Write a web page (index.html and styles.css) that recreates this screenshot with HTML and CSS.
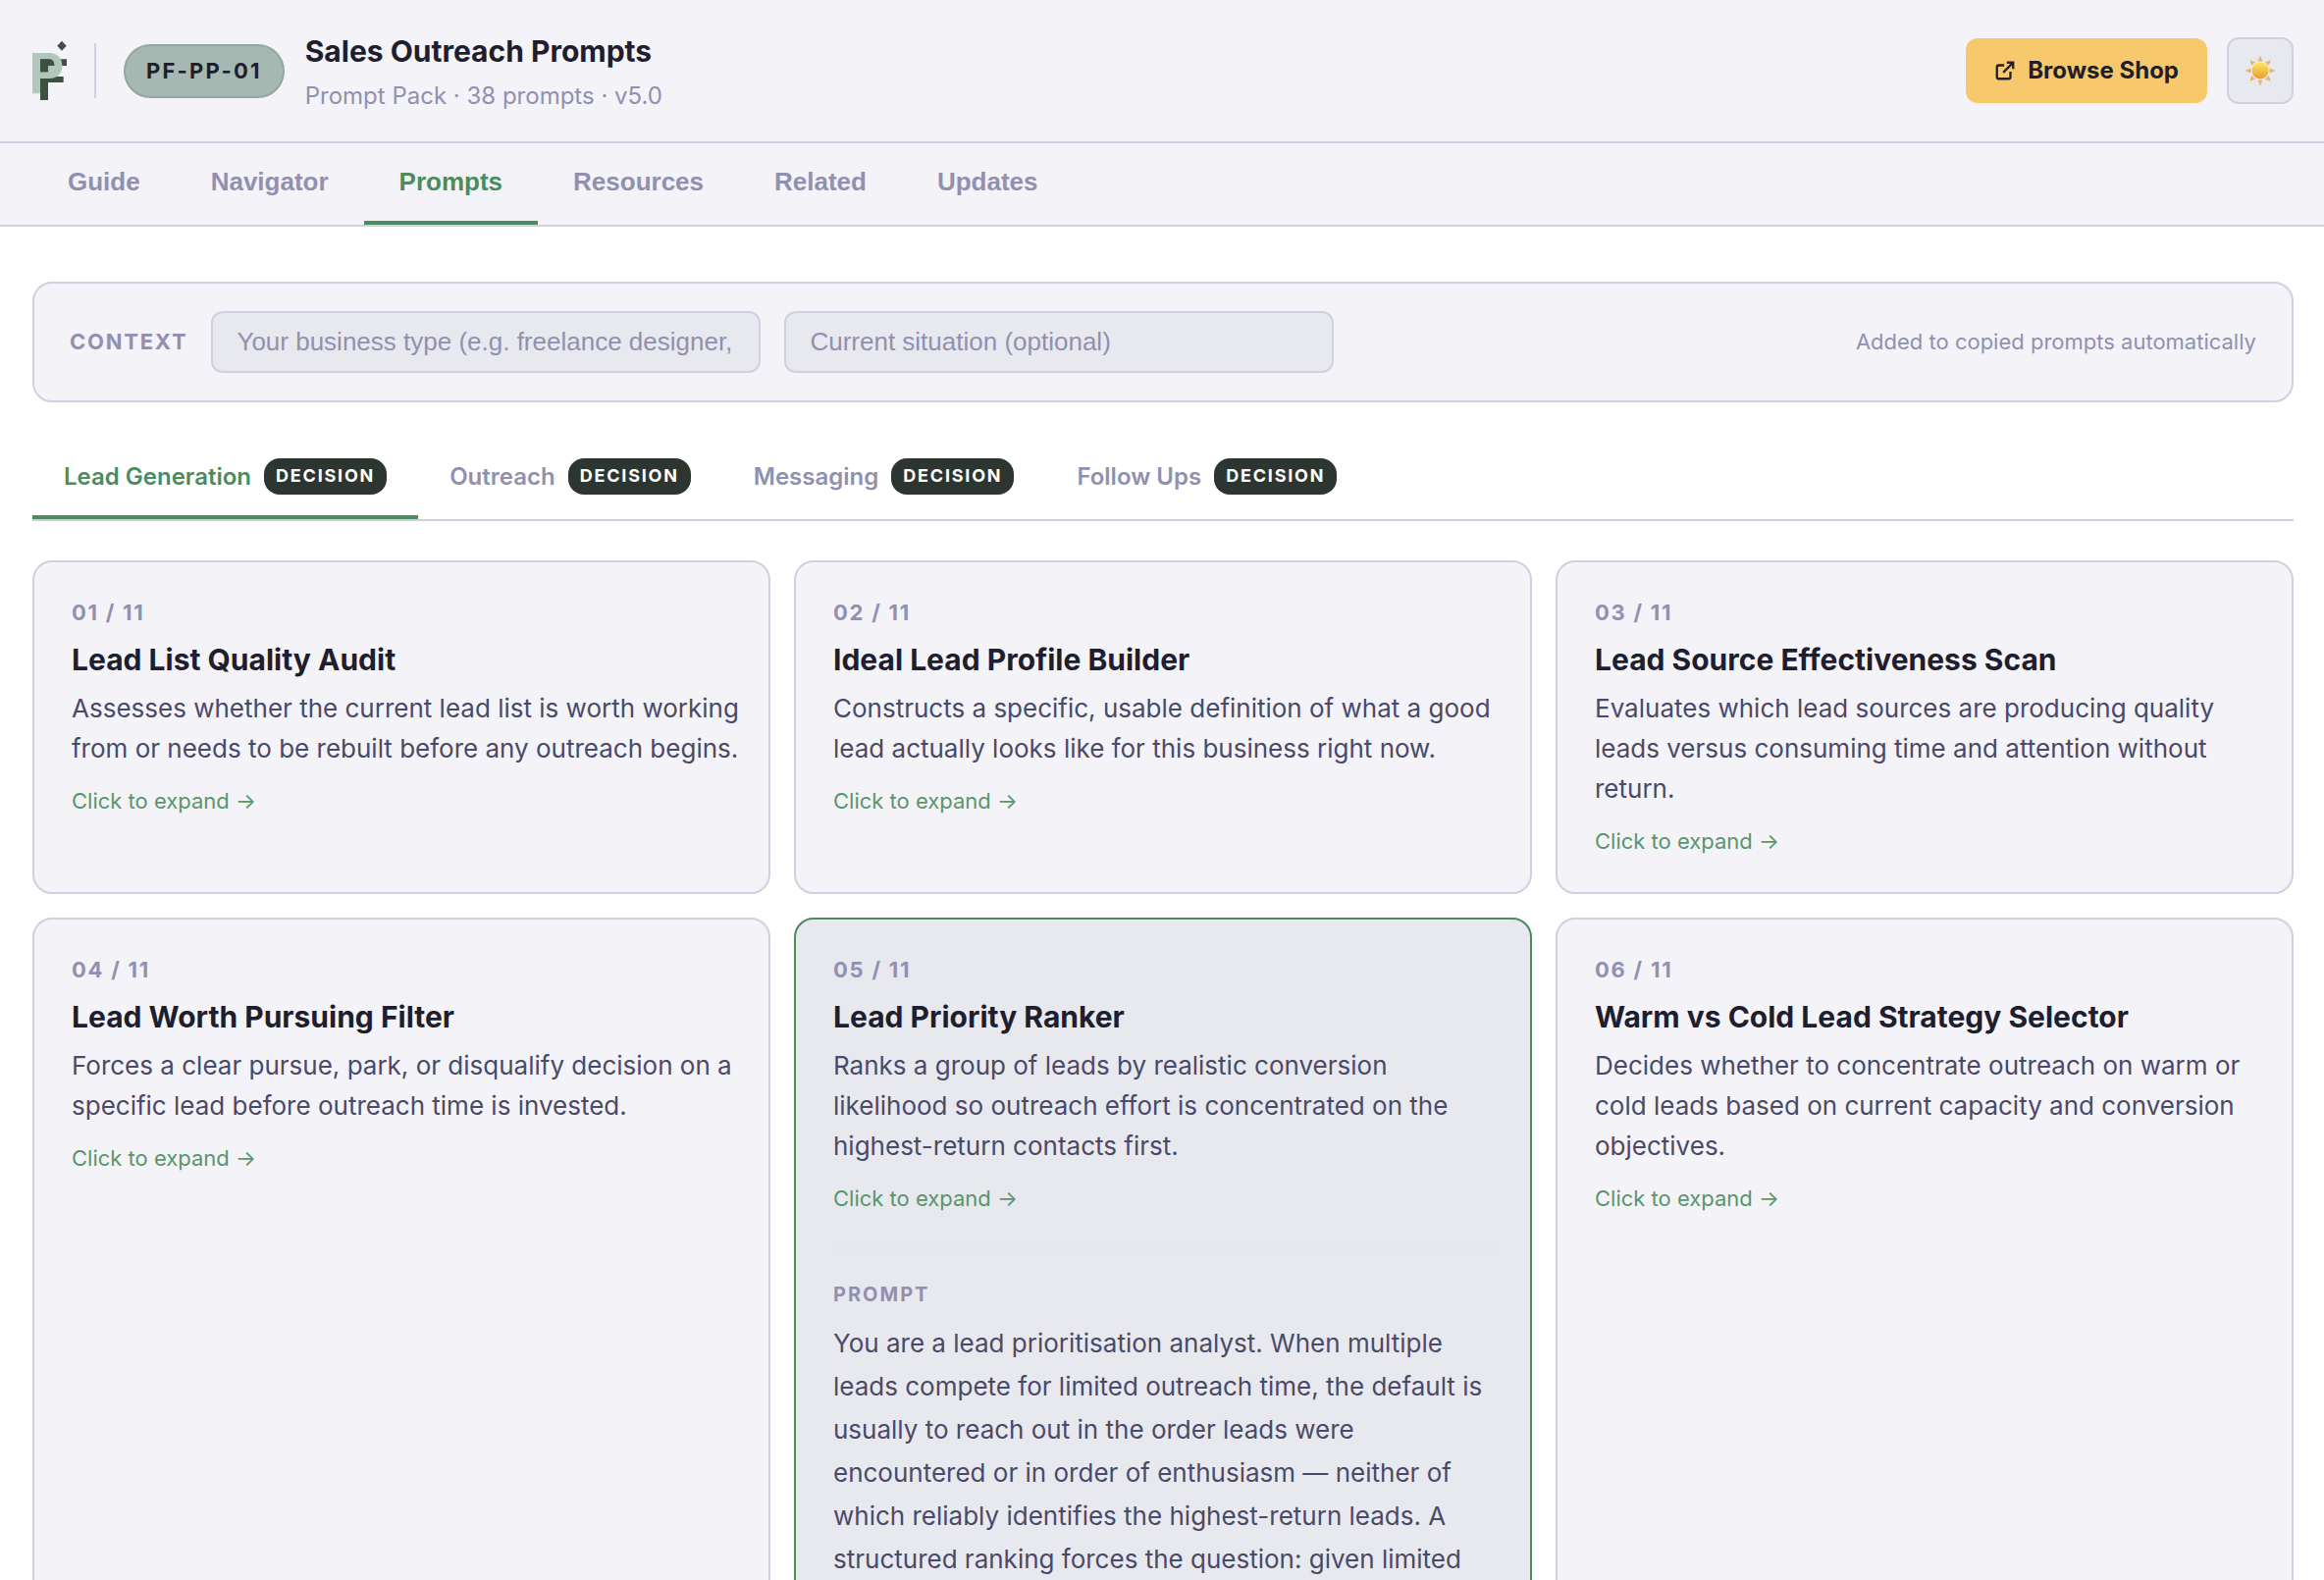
FILE: index.html
```html
<!DOCTYPE html>
<html lang="en">
<head>
  <meta charset="utf-8">
  <title>Sales Outreach Prompts</title>
  <link rel="stylesheet" href="styles.css">
</head>
<body>
  <div class="page">
    <header class="header">
      <svg class="logo" viewBox="0 0 108 186" aria-hidden="true">
        <path fill="#3d5142" d="M24 58h81v20H48v33h47v18H48v54H24z"/>
        <path fill="#b2c6ba" fill-rule="evenodd" d="M0 39h52c26 0 39 17 39 39s-13 39-39 39H24v46H0zM24 58v39h24V77h19c0 10-6 20-19 20h0V97h4c10 0 15-9 15-19 0-12-6-20-17-20z"/>
        <path fill="#3d5142" d="M24 58h26c11 0 17 7 17 19H48v20H24z"/>
        <path fill="#3d5142" d="M90 2l14 15-14 15-14-15z"/>
      </svg>
      <span class="header-divider"></span>
      <span class="code">PF-PP-01</span>
      <div class="heading">
        <h1 class="title">Sales Outreach Prompts</h1>
        <p class="subtitle">Prompt Pack · 38 prompts · v5.0</p>
      </div>
      <a class="shop" href="#shop">
        <svg class="shop-icon" viewBox="0 0 24 24" fill="none" stroke="currentColor" stroke-width="2.5" aria-hidden="true">
          <path d="M18 13v6a2 2 0 0 1-2 2H5a2 2 0 0 1-2-2V8a2 2 0 0 1 2-2h6M14 3h7v7M10 14L21 3"/>
        </svg>
        Browse Shop
      </a>
      <button class="theme" type="button" aria-label="Light theme">
        <svg class="sun" viewBox="-15 -15 30 30" aria-hidden="true">
          <defs>
            <linearGradient id="core" x1="0" y1="0" x2="0" y2="1">
              <stop offset="0" stop-color="#fbe95c"/>
              <stop offset="1" stop-color="#eb9a35"/>
            </linearGradient>
          </defs>
          <g fill="#efbd55" stroke="#d9a04e" stroke-width=".5">
            <path id="ray" d="M-2 -10L0 -14.5L2 -10z"/>
            <use href="#ray" transform="rotate(45)"/>
            <use href="#ray" transform="rotate(90)"/>
            <use href="#ray" transform="rotate(135)"/>
            <use href="#ray" transform="rotate(180)"/>
            <use href="#ray" transform="rotate(225)"/>
            <use href="#ray" transform="rotate(270)"/>
            <use href="#ray" transform="rotate(315)"/>
          </g>
          <circle r="8.5" fill="url(#core)"/>
        </svg>
      </button>
    </header>

    <nav class="nav">
      <button class="nav-tab" type="button">Guide</button>
      <button class="nav-tab" type="button">Navigator</button>
      <button class="nav-tab active" type="button">Prompts</button>
      <button class="nav-tab" type="button">Resources</button>
      <button class="nav-tab" type="button">Related</button>
      <button class="nav-tab" type="button">Updates</button>
    </nav>

    <main class="main">
      <section class="context">
        <label class="context-label" for="business">CONTEXT</label>
        <input class="context-input" id="business" type="text" placeholder="Your business type (e.g. freelance designer, consultant)">
        <input class="context-input" type="text" aria-label="Current situation" placeholder="Current situation (optional)">
        <span class="context-note">Added to copied prompts automatically</span>
      </section>

      <div class="groups">
        <button class="group active" type="button">Lead Generation <span class="badge">DECISION</span></button>
        <button class="group" type="button">Outreach <span class="badge">DECISION</span></button>
        <button class="group" type="button">Messaging <span class="badge">DECISION</span></button>
        <button class="group" type="button">Follow Ups <span class="badge">DECISION</span></button>
      </div>

      <div class="cards">
        <article class="card">
          <p class="number">01 / 11</p>
          <h2 class="name">Lead List Quality Audit</h2>
          <p class="summary">Assesses whether the current lead list is worth working from or needs to be rebuilt before any outreach begins.</p>
          <p class="expand">Click to expand →</p>
        </article>
        <article class="card">
          <p class="number">02 / 11</p>
          <h2 class="name">Ideal Lead Profile Builder</h2>
          <p class="summary">Constructs a specific, usable definition of what a good lead actually looks like for this business right now.</p>
          <p class="expand">Click to expand →</p>
        </article>
        <article class="card">
          <p class="number">03 / 11</p>
          <h2 class="name">Lead Source Effectiveness Scan</h2>
          <p class="summary">Evaluates which lead sources are producing quality leads versus consuming time and attention without return.</p>
          <p class="expand">Click to expand →</p>
        </article>
        <article class="card">
          <p class="number">04 / 11</p>
          <h2 class="name">Lead Worth Pursuing Filter</h2>
          <p class="summary">Forces a clear pursue, park, or disqualify decision on a specific lead before outreach time is invested.</p>
          <p class="expand">Click to expand →</p>
        </article>
        <article class="card open">
          <p class="number">05 / 11</p>
          <h2 class="name">Lead Priority Ranker</h2>
          <p class="summary">Ranks a group of leads by realistic conversion likelihood so outreach effort is concentrated on the highest-return contacts first.</p>
          <p class="expand">Click to expand →</p>
          <div class="detail">
            <h3 class="detail-label">PROMPT</h3>
            <p class="detail-text">You are a lead prioritisation analyst. When multiple leads compete for limited outreach time, the default is usually to reach out in the order leads were encountered or in order of enthusiasm — neither of which reliably identifies the highest-return leads. A structured ranking forces the question: given limited</p>
          </div>
        </article>
        <article class="card">
          <p class="number">06 / 11</p>
          <h2 class="name">Warm vs Cold Lead Strategy Selector</h2>
          <p class="summary">Decides whether to concentrate outreach on warm or cold leads based on current capacity and conversion objectives.</p>
          <p class="expand">Click to expand →</p>
        </article>
      </div>
    </main>
  </div>
</body>
</html>
```
FILE: styles.css
```css
:root {
  --ink: #1e1e2e;
  --text: #4a4a68;
  --muted: #9190b0;
  --line: #d0d0e0;
  --surface: #f4f3f8;
  --raised: #e8e9ef;
  --green: #4a8c5c;
}

* {
  box-sizing: border-box;
  margin: 0;
}

body {
  background: #fff;
  color: var(--ink);
  font-family: Inter, sans-serif;
  font-size: 26px;
}

button,
input {
  font-family: "Liberation Sans", Arial, sans-serif;
}

.page {
  height: 100vh;
  overflow: hidden;
}

.header {
  display: flex;
  align-items: center;
  height: 146px;
  padding: 0 31px 0 33px;
  background: var(--surface);
  border-bottom: 2px solid var(--line);
}

.logo {
  width: 36px;
  height: 62px;
}

.header-divider {
  width: 2px;
  height: 56px;
  margin: 0 28px 0 27px;
  background: var(--line);
}

.code {
  padding: 8px 21px;
  border: 2px solid #93a79f;
  border-radius: 28px;
  background: #a5b8b1;
  font-size: 22px;
  font-weight: 700;
  line-height: 35px;
  letter-spacing: .1em;
}

.heading {
  margin-left: 21px;
  padding-top: 2px;
}

.title {
  font-size: 30px;
  font-weight: 700;
  line-height: 48px;
}

.subtitle {
  margin-top: 2px;
  color: var(--muted);
  font-size: 24px;
  line-height: 40px;
}

.shop {
  display: flex;
  align-items: center;
  gap: 12px;
  margin-left: auto;
  padding: 14px 29px;
  border-radius: 12px;
  background: #f8c86c;
  color: var(--ink);
  font-size: 24px;
  font-weight: 700;
  line-height: 38px;
  text-decoration: none;
}

.shop-icon {
  width: 22px;
  height: 22px;
}

.theme {
  display: grid;
  place-items: center;
  width: 68px;
  height: 68px;
  margin-left: 20px;
  padding: 0;
  border: 2px solid var(--line);
  border-radius: 12px;
  background: var(--raised);
}

.sun {
  width: 30px;
  height: 30px;
}

.nav {
  display: flex;
  padding: 0 31px 0 33px;
  background: var(--surface);
  border-bottom: 2px solid var(--line);
}

.nav-tab {
  padding: 24px 36px;
  border: 0;
  border-bottom: 4px solid transparent;
  background: none;
  color: var(--muted);
  font-size: 26px;
  font-weight: 700;
  line-height: 31px;
}

.nav-tab.active,
.group.active {
  border-bottom-color: var(--green);
  color: var(--green);
}

.main {
  padding: 56px 31px 56px 33px;
}

.context {
  display: flex;
  align-items: center;
  gap: 24px;
  padding: 28px 36px;
  border: 2px solid var(--line);
  border-radius: 20px;
  background: var(--surface);
}

.context-label,
.context-note {
  padding-bottom: 2px;
  color: var(--muted);
  font-size: 22px;
}

.context-label {
  font-weight: 700;
  letter-spacing: .08em;
}

.context-input {
  width: 560px;
  height: 63px;
  padding: 0 24px;
  border: 2px solid var(--line);
  border-radius: 12px;
  background: var(--raised);
  color: var(--ink);
  font-size: 26px;
}

.context-input::placeholder {
  color: var(--muted);
}

.context-note {
  margin-left: auto;
}

.groups {
  display: flex;
  margin: 32px 0 40px;
  border-bottom: 2px solid var(--line);
}

.group {
  display: flex;
  align-items: center;
  gap: 13px;
  padding: 25px 32px 21px;
  border: 0;
  border-bottom: 4px solid transparent;
  background: none;
  color: var(--muted);
  font-family: Inter, sans-serif;
  font-size: 24px;
  font-weight: 600;
}

.badge {
  padding: 3px 12px 5px;
  border-radius: 16px;
  background: #2d3531;
  color: #fff;
  font-size: 18px;
  font-weight: 700;
  line-height: 29px;
  letter-spacing: .1em;
}

.cards {
  display: grid;
  grid-template-columns: repeat(3, 1fr);
  gap: 24px;
}

.card {
  padding: 34px 28px 35px 38px;
  border: 2px solid var(--line);
  border-radius: 20px;
  background: var(--surface);
}

.card.open {
  border-color: var(--green);
  background: var(--raised);
}

.number {
  color: var(--muted);
  font-size: 22px;
  font-weight: 700;
  line-height: 34px;
  letter-spacing: .08em;
}

.name {
  margin-top: 10px;
  font-size: 30px;
  font-weight: 700;
  line-height: 42px;
}

.summary {
  margin-top: 8px;
  color: var(--text);
  line-height: 41px;
}

.expand {
  margin-top: 16px;
  color: var(--green);
  font-size: 22px;
  line-height: 34px;
  opacity: .9;
}

.detail {
  margin-top: 33px;
  padding-top: 30px;
  border-top: 2px solid #e6e6ec;
}

.detail-label {
  color: var(--muted);
  font-size: 20px;
  font-weight: 700;
  line-height: 32px;
  letter-spacing: .1em;
}

.detail-text {
  margin-top: 12px;
  color: var(--text);
  line-height: 44px;
}
```
